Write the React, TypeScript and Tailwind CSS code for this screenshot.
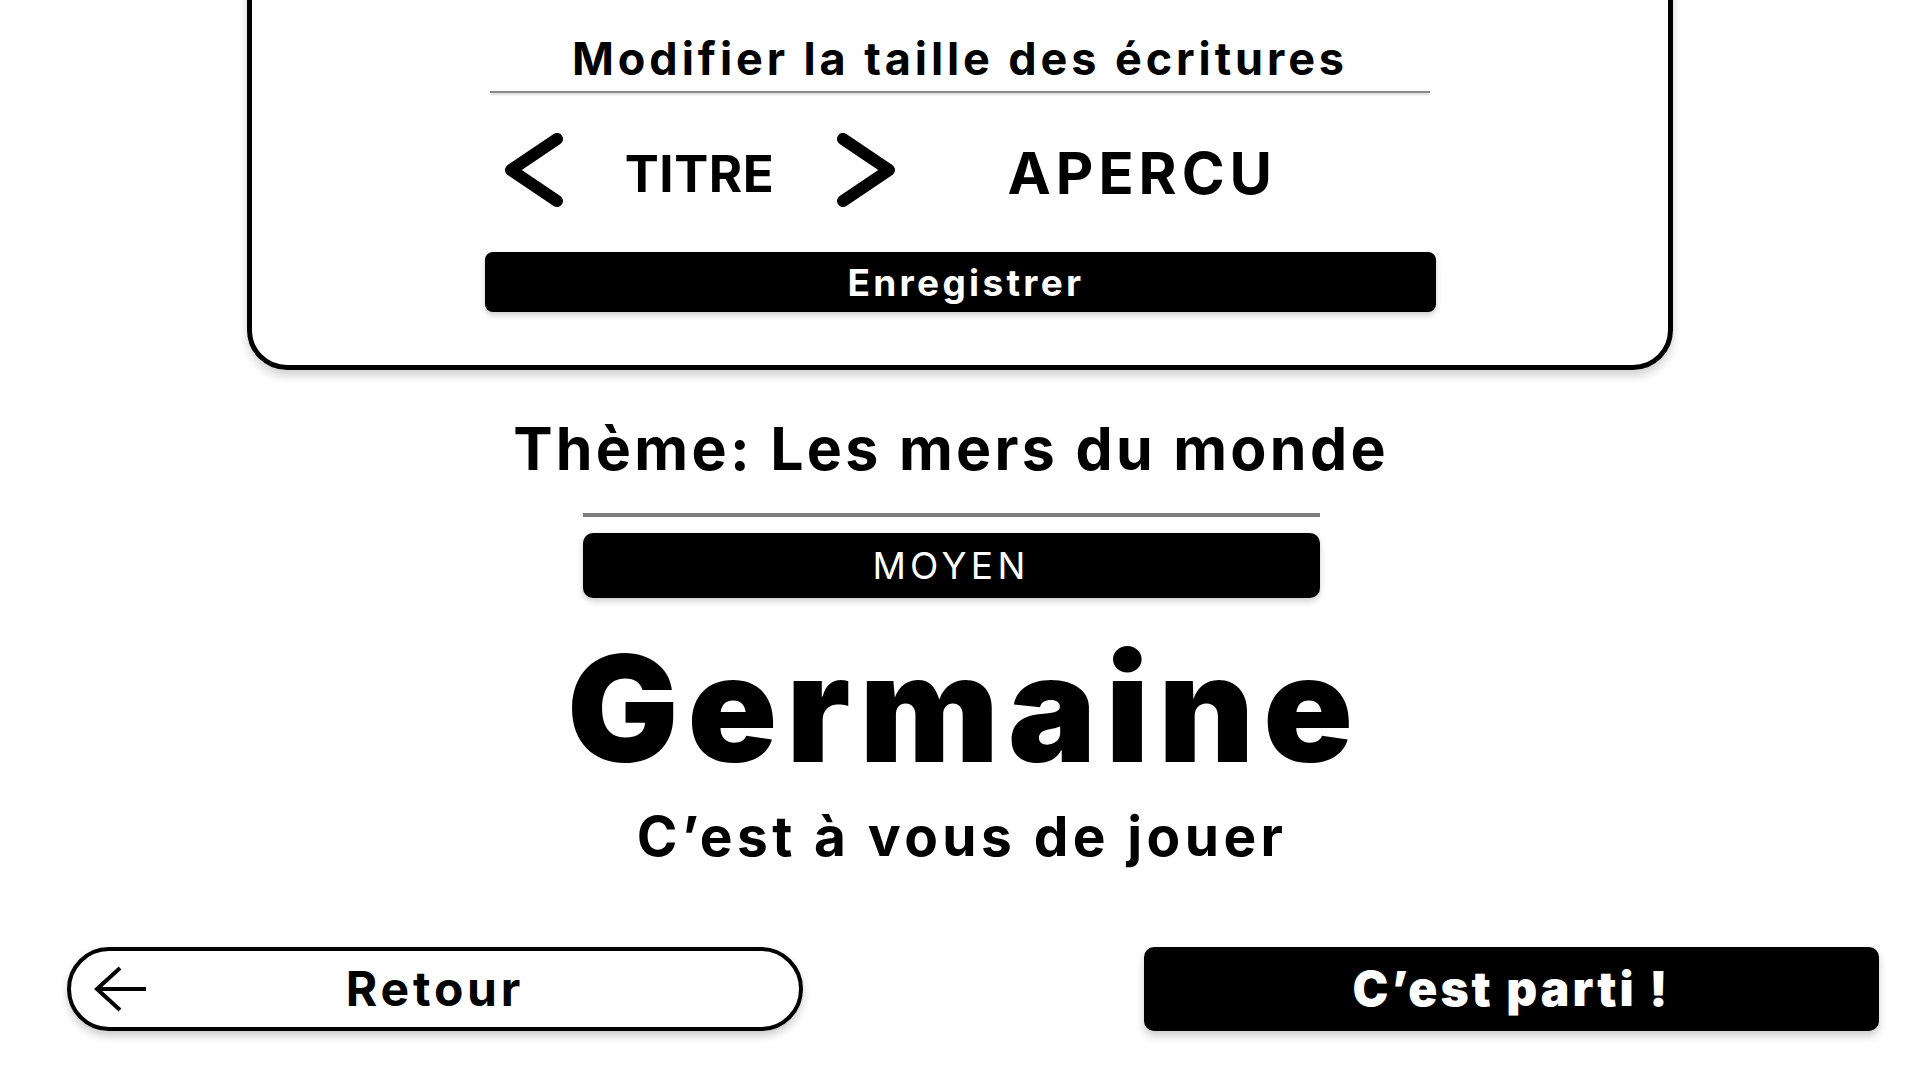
import React from 'react';

function Chevron({ dir }: { dir: 'left' | 'right' }) {
  const d = dir === 'left' ? 'M54 7 L8 38 L54 69' : 'M8 7 L54 38 L8 69';
  return (
    <svg width="62" height="76" viewBox="0 0 62 76" className="shrink-0">
      <path d={d} fill="none" stroke="black" strokeWidth="12" strokeLinecap="round" strokeLinejoin="round" />
    </svg>
  );
}

function ArrowLeft() {
  return (
    <svg width="54" height="46" viewBox="0 0 54 46" className="absolute left-[23px] top-1/2 -translate-y-1/2">
      <path d="M26 2 L3 23 L26 44 M3 23 H52" fill="none" stroke="black" strokeWidth="4" strokeLinecap="butt" />
    </svg>
  );
}

export default function App() {
  return (
    <div className="min-h-screen w-full overflow-hidden bg-white font-['Inter',sans-serif] text-black">
      {/* Taille des écritures */}
      <div className="mx-auto -mt-[60px] w-[1426px] rounded-[40px] border-[5px] border-black pb-[53px] pt-[91px] shadow-[0_6px_10px_rgba(0,0,0,0.18)]">
        <div className="mx-auto flex w-[951px] flex-col items-center">
          <h2 className="text-[45px] font-bold leading-none tracking-[3.9px]">Modifier la taille des écritures</h2>
          <div className="mt-[10px] h-[2px] w-[940px] bg-[#8a8a8a] shadow-[0_2px_2px_rgba(0,0,0,0.15)]" />

          <div className="mt-[40px] flex h-[74px] w-full items-center pl-[18px]">
            <Chevron dir="left" />
            <div className="flex w-[270px] justify-center">
              <span className="mt-[6px] text-[51px] font-bold leading-none tracking-[0.5px]">TITRE</span>
            </div>
            <Chevron dir="right" />
            <span className="ml-[111px] mt-[6px] text-[58px] font-bold leading-none tracking-[5px]">APERCU</span>
          </div>

          <button className="mt-[45px] flex h-[60px] w-full items-center justify-center rounded-[8px] bg-black pl-[12px] text-[37px] font-bold leading-none tracking-[3.3px] text-white shadow-[0_3px_6px_rgba(0,0,0,0.2)]">
            Enregistrer
          </button>
        </div>
      </div>

      {/* Thème */}
      <div className="flex flex-col items-center pr-[18px]">
        <h1 className="mt-[49px] text-[59px] font-bold leading-none tracking-[3.3px]">Thème: Les mers du monde</h1>
        <div className="mt-[35px] h-[4px] w-[737px] bg-[#7d7d7d]" />
        <div className="mt-[16px] flex h-[65px] w-[737px] items-center justify-center rounded-[10px] bg-black text-[37px] font-normal leading-none tracking-[4.3px] text-white shadow-[0_3px_6px_rgba(0,0,0,0.2)]">
          MOYEN
        </div>
      </div>
      <div className="flex flex-col items-center">
        <p className="mt-[37px] pl-[9px] text-[148px] font-black leading-none tracking-[9px]">Germaine</p>
        <p className="mt-[26px] pl-[4px] text-[55px] font-bold leading-none tracking-[4.4px]">C’est à vous de jouer</p>
      </div>

      {/* Actions */}
      <div className="mt-[83px] flex justify-between pl-[67px] pr-[41px]">
        <button className="relative flex h-[84px] w-[736px] items-center justify-center rounded-full border-[4px] border-black bg-white text-[48px] font-bold leading-none tracking-[3.8px] shadow-[0_5px_8px_rgba(0,0,0,0.2)]">
          <ArrowLeft />
          Retour
        </button>
        <button className="flex h-[84px] w-[735px] items-center justify-center rounded-[10px] bg-black text-[48px] font-black leading-none tracking-[3px] text-white shadow-[0_5px_8px_rgba(0,0,0,0.2)]">
          C’est parti !
        </button>
      </div>
    </div>
  );
}
